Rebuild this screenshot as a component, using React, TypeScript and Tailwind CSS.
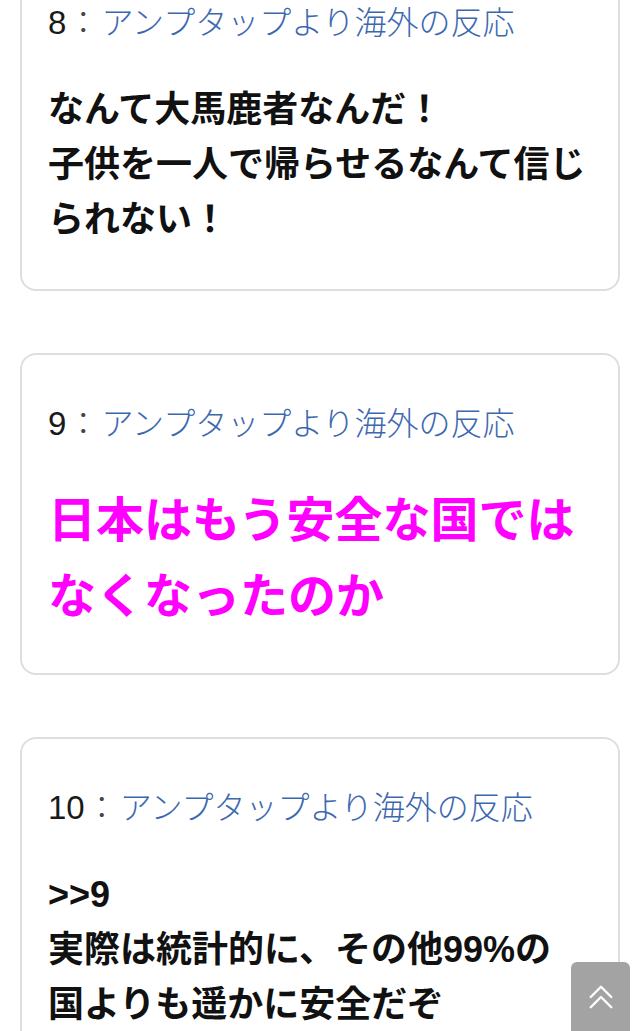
const posts = [
  { no: 8, body: ["なんて大馬鹿者なんだ！", "子供を一人で帰らせるなんて信じ", "られない！"], big: false },
  { no: 9, body: ["日本はもう安全な国では", "なくなったのか"], big: true },
  { no: 10, body: [">>9", "実際は統計的に、その他99%の", "国よりも遥かに安全だぞ"], big: false },
];

function Post({ no, body, big }: { no: number; body: string[]; big: boolean }) {
  return (
    <div
      className={
        big
          ? "rounded-2xl border-2 border-[#dedede] bg-white pl-[26px] pr-4 pt-[45px] pb-[38px]"
          : "rounded-2xl border-2 border-[#dedede] bg-white pl-[26px] pr-4 pt-[45px] pb-[42px]"
      }
    >
      <div className="text-[32px] leading-[47px] font-light text-[#1a1a1a]">
        <span className="text-[33px]">{no}</span>
        <span className="ml-[1px] mr-[2px] text-[#444]">：</span>
        <span className="text-[#3d68b0]">アンプタップより海外の反応</span>
      </div>
      <div
        className={
          big
            ? "mt-[35px] text-[48px] leading-[76px] font-bold text-[#f0f]"
            : "mt-[35px] text-[36px] leading-[55px] font-bold text-[#111]"
        }
      >
        {body.map((line, i) => (
          <div key={i}>{line}</div>
        ))}
      </div>
    </div>
  );
}

export default function App() {
  return (
    <div
      className="relative h-[1031px] w-[640px] overflow-hidden bg-white"
      style={{ fontFamily: '"Liberation Sans", "Noto Sans CJK JP", sans-serif' }}
    >
      <div className="-mt-[48px] flex flex-col gap-[62px] px-5">
        {posts.map((p) => (
          <Post key={p.no} {...p} />
        ))}
      </div>

      {/* scroll to top */}
      <button className="absolute right-[10px] top-[962px] flex h-[80px] w-[59px] items-start justify-center rounded-t-md bg-[#a3a3a3] pt-[21px]">
        <svg width="28" height="28" viewBox="0 0 30 30" fill="none" stroke="white" strokeWidth="2.6" strokeLinecap="round" strokeLinejoin="round">
          <path d="M4 15 L15 4 L26 15" />
          <path d="M4 26 L15 15 L26 26" />
        </svg>
      </button>
    </div>
  );
}
